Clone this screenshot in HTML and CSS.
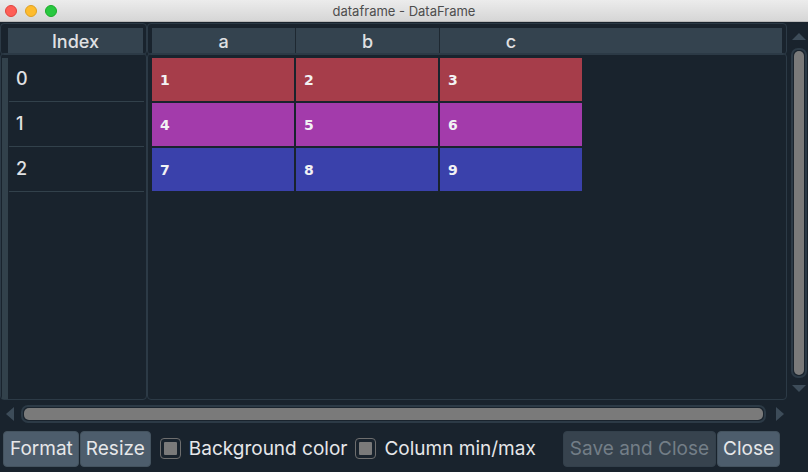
FILE: index.html
```html
<!DOCTYPE html>
<html>
<head>
<meta charset="utf-8">
<link rel="stylesheet" href="styles.css">
</head>
<body>
<div class="titlebar">
  <div class="lights">
    <span class="light red"></span>
    <span class="light yellow"></span>
    <span class="light green"></span>
  </div>
  <div class="title">dataframe - DataFrame</div>
  <div></div>
</div>
<div class="main">
  <div class="panel left">
    <div class="hdr">
      <div class="hcell index-h">Index</div>
    </div>
    <div class="body">
      <div class="strip"></div>
      <div class="rows">
        <div class="irow">0</div>
        <div class="irow">1</div>
        <div class="irow">2</div>
      </div>
    </div>
  </div>
  <div class="panel right">
    <div class="hdr">
      <div class="hcell col">a</div>
      <div class="hcell col">b</div>
      <div class="hcell colc"><span>c</span></div>
    </div>
    <div class="body">
      <div class="grid">
        <div class="cell red">1</div><div class="cell red">2</div><div class="cell red">3</div>
        <div class="cell mag">4</div><div class="cell mag">5</div><div class="cell mag">6</div>
        <div class="cell blue">7</div><div class="cell blue">8</div><div class="cell blue">9</div>
      </div>
    </div>
  </div>
  <div class="vscroll">
    <div class="arrow up"></div>
    <div class="vtrack"><div class="vhandle"></div></div>
    <div class="arrow down"></div>
  </div>
</div>
<div class="hscroll">
  <div class="arrow lft"></div>
  <div class="htrack"><div class="hhandle"></div></div>
  <div class="arrow rgt"></div>
</div>
<div class="buttons">
  <button class="btn first">Format</button>
  <button class="btn">Resize</button>
  <span class="cb"><span></span></span>
  <span class="label">Background color</span>
  <span class="cb"><span></span></span>
  <span class="label">Column min/max</span>
  <span class="spacer"></span>
  <button class="btn disabled">Save and Close</button>
  <button class="btn">Close</button>
</div>
</body>
</html>
```

FILE: styles.css
```css
* { box-sizing: border-box; }
html, body { margin: 0; padding: 0; }
body {
  width: 808px;
  height: 472px;
  overflow: hidden;
  background: #19232d;
  font-family: Inter, "Noto Sans", sans-serif;
  color: #e0e1e3;
}
.titlebar {
  height: 22px;
  display: grid;
  grid-template-columns: 1fr auto 1fr;
  align-items: center;
  background: linear-gradient(#ececec, #d6d6d6);
  border-bottom: 1px solid #b9b9b9;
}
.lights { display: flex; gap: 8px; padding-left: 5px; }
.light { width: 12px; height: 12px; border-radius: 50%; display: block; }
.light.red { background: #fe5f57; border: 1px solid #e0443e; }
.light.yellow { background: #febc2e; border: 1px solid #dea123; }
.light.green { background: #28c840; border: 1px solid #1aab29; }
.title { font-size: 13px; color: #4d4d4d; }

.main { display: flex; height: 378px; }
.panel { display: flex; flex-direction: column; padding-top: 1px; }
.panel.left { width: 147px; }
.panel.right { width: 640px; }
.hdr {
  display: flex;
  height: 32px;
  border: 1px solid #2c3a46;
  border-radius: 4px;
  padding: 4px 4px 2px 4px;
}
.left .hdr { padding-left: 7px; padding-right: 2px; }
.hcell {
  height: 25px;
  background: #34434f;
  font-size: 18px;
  font-weight: 500;
  padding-top: 2px;
  display: flex;
  align-items: center;
  justify-content: center;
}
.index-h { width: 135px; }
.col { width: 144px; border-right: 1px solid #1e2831; }
.colc { width: 342px; justify-content: flex-start; }
.colc span { width: 142px; text-align: center; }
.body {
  flex: 1;
  margin-top: -2px;
  border: 1px solid #2c3a46;
  border-radius: 4px;
  display: flex;
  padding-top: 3px;
}
.left .body { padding-left: 1px; }
.strip { width: 6px; background: #32414b; margin-top: 1px; }
.rows { width: 135px; margin-left: 1px; }
.irow {
  height: 45px;
  border-bottom: 1px solid #32414b;
  font-size: 18px;
  font-weight: 500;
  padding-left: 7px;
  padding-bottom: 2px;
  display: flex;
  align-items: center;
}
.right .body { padding-left: 4px; padding-top: 4px; }
.grid {
  display: grid;
  grid-template-columns: repeat(3, 142px);
  grid-auto-rows: 43px;
  gap: 2px;
  align-content: start;
}
.cell {
  font-family: "DejaVu Sans", sans-serif;
  font-size: 14px;
  font-weight: bold;
  color: #f2f2f4;
  display: flex;
  align-items: center;
  padding-left: 8px;
  padding-top: 1px;
}
.cell.red { background: #a63d4a; }
.cell.mag { background: #a33bab; }
.cell.blue { background: #3a41ab; }

.vscroll {
  width: 21px;
  display: flex;
  flex-direction: column;
  align-items: center;
  padding: 11px 0 8px 3px;
}
.arrow { width: 0; height: 0; border-style: solid; border-color: transparent; }
.arrow.up { border-width: 0 7px 7px 7px; border-bottom-color: #3d4c59; margin-bottom: 8px; }
.arrow.down { border-width: 7px 7px 0 7px; border-top-color: #3d4c59; margin-top: 7px; }
.vtrack {
  width: 16px;
  flex: 1;
  border: 2px solid #2c3a46;
  border-radius: 7px;
  padding: 1px;
  display: flex;
}
.vhandle { flex: 1; background: #7a7a7a; border-radius: 5px; }

.hscroll {
  height: 24px;
  display: flex;
  align-items: center;
  padding: 3px 24px 0 6px;
}
.arrow.lft { border-width: 7px 8px 7px 0; border-right-color: #3d4c59; margin-right: 7px; }
.arrow.rgt { border-width: 7px 0 7px 8px; border-left-color: #3d4c59; margin-left: 10px; }
.htrack {
  flex: 1;
  height: 18px;
  border: 2px solid #2c3a46;
  border-radius: 7px;
  padding: 1px;
  display: flex;
}
.hhandle { flex: 1; background: #7a7a7a; border-radius: 5px; }

.buttons {
  display: flex;
  align-items: center;
  padding: 6px 27px 0 3px;
  height: 43px;
}
.btn {
  height: 36px;
  font-family: Inter, "Noto Sans", sans-serif;
  font-size: 19px;
  color: #e6e7e9;
  background: #4d5d6c;
  border: 1px solid #44535f;
  border-radius: 4px;
  padding: 0 5px;
  margin-right: 1px;
}
.btn.first { padding: 0 5px 0 6px; }
.btn.disabled { background: #37434e; color: #737e87; border-color: #33404b; padding: 0 6px; }
.cb {
  width: 21px;
  height: 21px;
  border: 1.5px solid #6e6e6e;
  border-radius: 4px;
  padding: 3px;
  margin-left: 8px;
  margin-right: 8px;
  display: block;
}
.cb span { display: block; width: 100%; height: 100%; background: #7a7a7a; border-radius: 1px; }
.label { font-size: 19px; color: #e6e7e9; }
.spacer { flex: 1; }
```
